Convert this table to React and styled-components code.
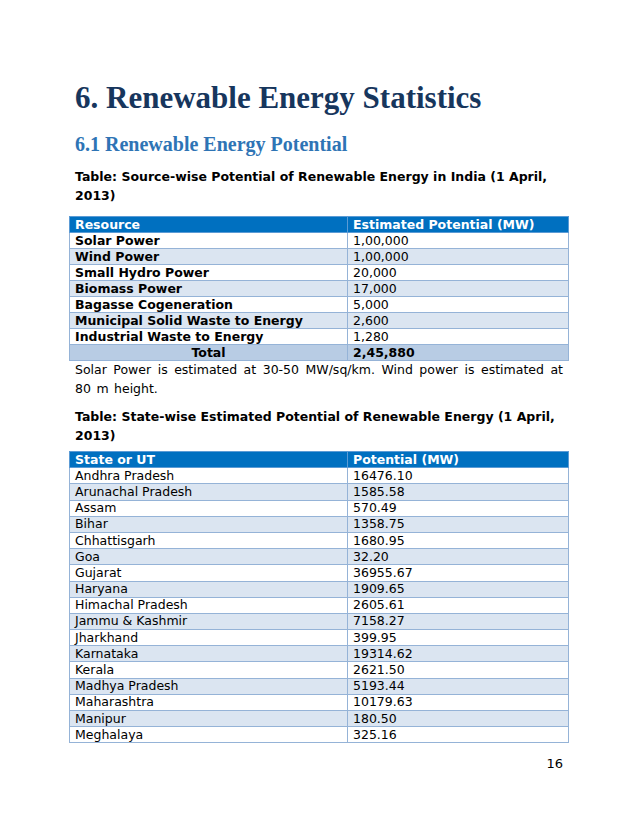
import React from "react";
import styled, { createGlobalStyle } from "styled-components";

const Global = createGlobalStyle`
  html, body { margin: 0; padding: 0; background: #fff; }
  body { font-family: "DejaVu Sans", Verdana, sans-serif; color: #000; }
`;

const Page = styled.div`
  width: 638px;
  height: 826px;
  box-sizing: border-box;
  padding: 80px 69px 0 69px;
  display: flex;
  flex-direction: column;
`;

const Title = styled.h1`
  margin: 0 6px;
  font-family: "Liberation Serif", "DejaVu Serif", serif;
  font-weight: bold;
  font-size: 31px;
  line-height: 36px;
  color: #17365d;
`;

const Subtitle = styled.h2`
  margin: 16px 6px 0;
  font-family: "Liberation Serif", "DejaVu Serif", serif;
  font-weight: bold;
  font-size: 20px;
  line-height: 24px;
  color: #2e74b5;
`;

const Caption = styled.p`
  margin: ${(p) => p.$top}px 6px 0;
  font-size: 12.5px;
  font-weight: bold;
  line-height: 18.5px;
`;

const Para = styled.p`
  margin: -1px 6px 0;
  font-size: 12.5px;
  line-height: 19px;
  text-align: justify;
  word-spacing: 1.5px;
`;

const Table = styled.table`
  margin-top: ${(p) => p.$top}px;
  width: 500px;
  border-collapse: collapse;
  table-layout: fixed;
  font-size: 12.5px;
`;

const HeadCell = styled.th`
  background: #0070c0;
  color: #fff;
  font-weight: bold;
  text-align: left;
  padding: 0 5px;
  height: ${(p) => p.$h}px;
  line-height: 14px;
  border: 1px solid #5b9bd5;
`;

const Row = styled.tr`
  background: ${(p) => (p.$total ? "#b8cce4" : p.$alt ? "#dbe5f1" : "#fff")};
`;

const Cell = styled.td`
  padding: 0 5px;
  height: ${(p) => p.$h}px;
  line-height: 14px;
  border: 1px solid #95b3d7;
  font-weight: ${(p) => (p.$bold ? "bold" : "normal")};
  text-align: ${(p) => (p.$center ? "center" : "left")};
  white-space: nowrap;
  overflow: hidden;
`;

const PageNum = styled.div`
  margin: 13px 6px 0;
  text-align: right;
  font-size: 13px;
`;

const sources = [
  ["Solar Power", "1,00,000"],
  ["Wind Power", "1,00,000"],
  ["Small Hydro Power", "20,000"],
  ["Biomass Power", "17,000"],
  ["Bagasse Cogeneration", "5,000"],
  ["Municipal Solid Waste to Energy", "2,600"],
  ["Industrial Waste to Energy", "1,280"],
];

const states = [
  ["Andhra Pradesh", "16476.10"],
  ["Arunachal Pradesh", "1585.58"],
  ["Assam", "570.49"],
  ["Bihar", "1358.75"],
  ["Chhattisgarh", "1680.95"],
  ["Goa", "32.20"],
  ["Gujarat", "36955.67"],
  ["Haryana", "1909.65"],
  ["Himachal Pradesh", "2605.61"],
  ["Jammu & Kashmir", "7158.27"],
  ["Jharkhand", "399.95"],
  ["Karnataka", "19314.62"],
  ["Kerala", "2621.50"],
  ["Madhya Pradesh", "5193.44"],
  ["Maharashtra", "10179.63"],
  ["Manipur", "180.50"],
  ["Meghalaya", "325.16"],
];

export default function App() {
  return (
    <>
      <Global />
      <Page>
        <Title>6. Renewable Energy Statistics</Title>
        <Subtitle>6.1 Renewable Energy Potential</Subtitle>
        <Caption $top={12}>
          Table: Source-wise Potential of Renewable Energy in India (1 April,
          2013)
        </Caption>
        <Table $top={11}>
          <colgroup>
            <col style={{ width: "278px" }} />
            <col />
          </colgroup>
          <thead>
            <tr>
              <HeadCell $h={15}>Resource</HeadCell>
              <HeadCell $h={15}>Estimated Potential (MW)</HeadCell>
            </tr>
          </thead>
          <tbody>
            {sources.map(([k, v], i) => (
              <Row key={k} $alt={i % 2 === 1}>
                <Cell $h={15} $bold>{k}</Cell>
                <Cell $h={15}>{v}</Cell>
              </Row>
            ))}
            <Row $total>
              <Cell $h={15} $bold $center>Total</Cell>
              <Cell $h={15} $bold>2,45,880</Cell>
            </Row>
          </tbody>
        </Table>
        <Para>
          Solar Power is estimated at 30-50 MW/sq/km. Wind power is estimated
          at 80 m height.
        </Para>
        <Caption $top={10}>
          Table: State-wise Estimated Potential of Renewable Energy (1 April,
          2013)
        </Caption>
        <Table $top={6}>
          <colgroup>
            <col style={{ width: "278px" }} />
            <col />
          </colgroup>
          <thead>
            <tr>
              <HeadCell $h={15.2}>State or UT</HeadCell>
              <HeadCell $h={15.2}>Potential (MW)</HeadCell>
            </tr>
          </thead>
          <tbody>
            {states.map(([k, v], i) => (
              <Row key={k} $alt={i % 2 === 1}>
                <Cell $h={15.2}>{k}</Cell>
                <Cell $h={15.2}>{v}</Cell>
              </Row>
            ))}
          </tbody>
        </Table>
        <PageNum>16</PageNum>
      </Page>
    </>
  );
}
